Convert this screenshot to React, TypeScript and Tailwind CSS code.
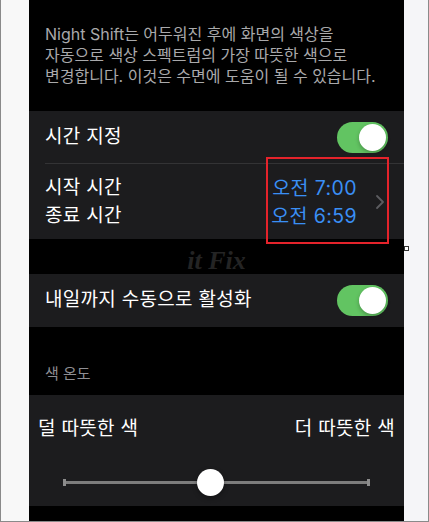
import { ChevronRight } from "lucide-react";

function Toggle() {
  return (
    <div className="relative h-[31px] w-[51px] rounded-full bg-[#62c462]">
      <div className="absolute right-[2px] top-[2px] h-[27px] w-[27px] rounded-full bg-white shadow-[0_2px_4px_rgba(0,0,0,0.25)]" />
    </div>
  );
}

export default function App() {
  return (
    <div
      className="relative flex h-[522px] w-[429px] border-x border-b border-[#8a8a8a] bg-[#f7f7f7]"
      style={{ fontFamily: '"Inter", "Noto Sans CJK KR", sans-serif' }}
    >
      <div className="w-[28px] bg-[#f8f8f8]" />

      <main className="relative flex w-[375px] flex-col bg-black">
        <p className="px-4 pb-[24px] pt-[24px] text-[16px] leading-[21px] text-[#a9a9ab]">
          Night Shift는 어두워진 후에 화면의 색상을
          <br />
          자동으로 색상 스펙트럼의 가장 따뜻한 색으로
          <br />
          변경합니다. 이것은 수면에 도움이 될 수 있습니다.
        </p>

        <section className="bg-[#1c1c1e]">
          <div className="flex h-[52px] items-center justify-between pr-4 pl-4">
            <span className="text-[19px] tracking-[0.3px] text-white">시간 지정</span>
            <Toggle />
          </div>
          <div className="ml-4 h-px bg-[#333335]" />
          <div className="flex h-[75px] items-center pl-4 pr-[12px]">
            <div className="flex flex-col text-[19px] leading-[28px] tracking-[0.3px] text-white">
              <span>시작 시간</span>
              <span>종료 시간</span>
            </div>
            <div className="ml-auto flex flex-col items-end text-[19.5px] leading-[28px] tracking-[0.4px] text-[#3a8ff5]">
              <span>오전 7:00</span>
              <span>오전 6:59</span>
            </div>
            <ChevronRight className="ml-[11px] h-[24px] w-[24px] text-[#5c5c60]" strokeWidth={1.8} />
          </div>
        </section>

        <div className="flex h-[35px] items-end justify-center">
          <span
            className="text-[26px] font-bold italic leading-none text-[#242424]"
            style={{ fontFamily: '"Liberation Serif", serif' }}
          >
            it Fix
          </span>
        </div>

        <section className="flex h-[53px] items-center justify-between bg-[#1c1c1e] px-4">
          <span className="text-[19px] tracking-[0.3px] text-white">내일까지 수동으로 활성화</span>
          <Toggle />
        </section>

        <div className="flex h-[68px] items-end px-4 pb-[10px]">
          <span className="text-[15px] text-[#8e8e93]">색 온도</span>
        </div>

        <section className="flex h-[111px] flex-col bg-[#1c1c1e] px-[9px] pt-[22px]">
          <div className="flex justify-between text-[19px] leading-[24px] tracking-[0.3px] text-white">
            <span>덜 따뜻한 색</span>
            <span>더 따뜻한 색</span>
          </div>
          <div className="relative mx-[25px] mt-[27px] flex h-[28px] items-center">
            <div className="h-[7px] w-[3px] bg-[#8c8c8c]" />
            <div className="h-[3px] flex-1 bg-[#7d7d7d]" />
            <div className="h-[7px] w-[3px] bg-[#8c8c8c]" />
            <div className="absolute left-[134px] top-[1px] h-[27px] w-[27px] rounded-full bg-white shadow-[0_2px_5px_rgba(0,0,0,0.35)]" />
          </div>
        </section>

        <div className="flex-1 bg-black" />

        <div className="absolute left-[237px] top-[157px] h-[87px] w-[123px] border-2 border-[#e5232b]" />
      </main>

      <div className="flex-1 bg-[#f5f5f8]" />

      <div className="absolute left-[403px] top-[246px] h-[5px] w-[5px] border border-[#333] bg-white" />
    </div>
  );
}
